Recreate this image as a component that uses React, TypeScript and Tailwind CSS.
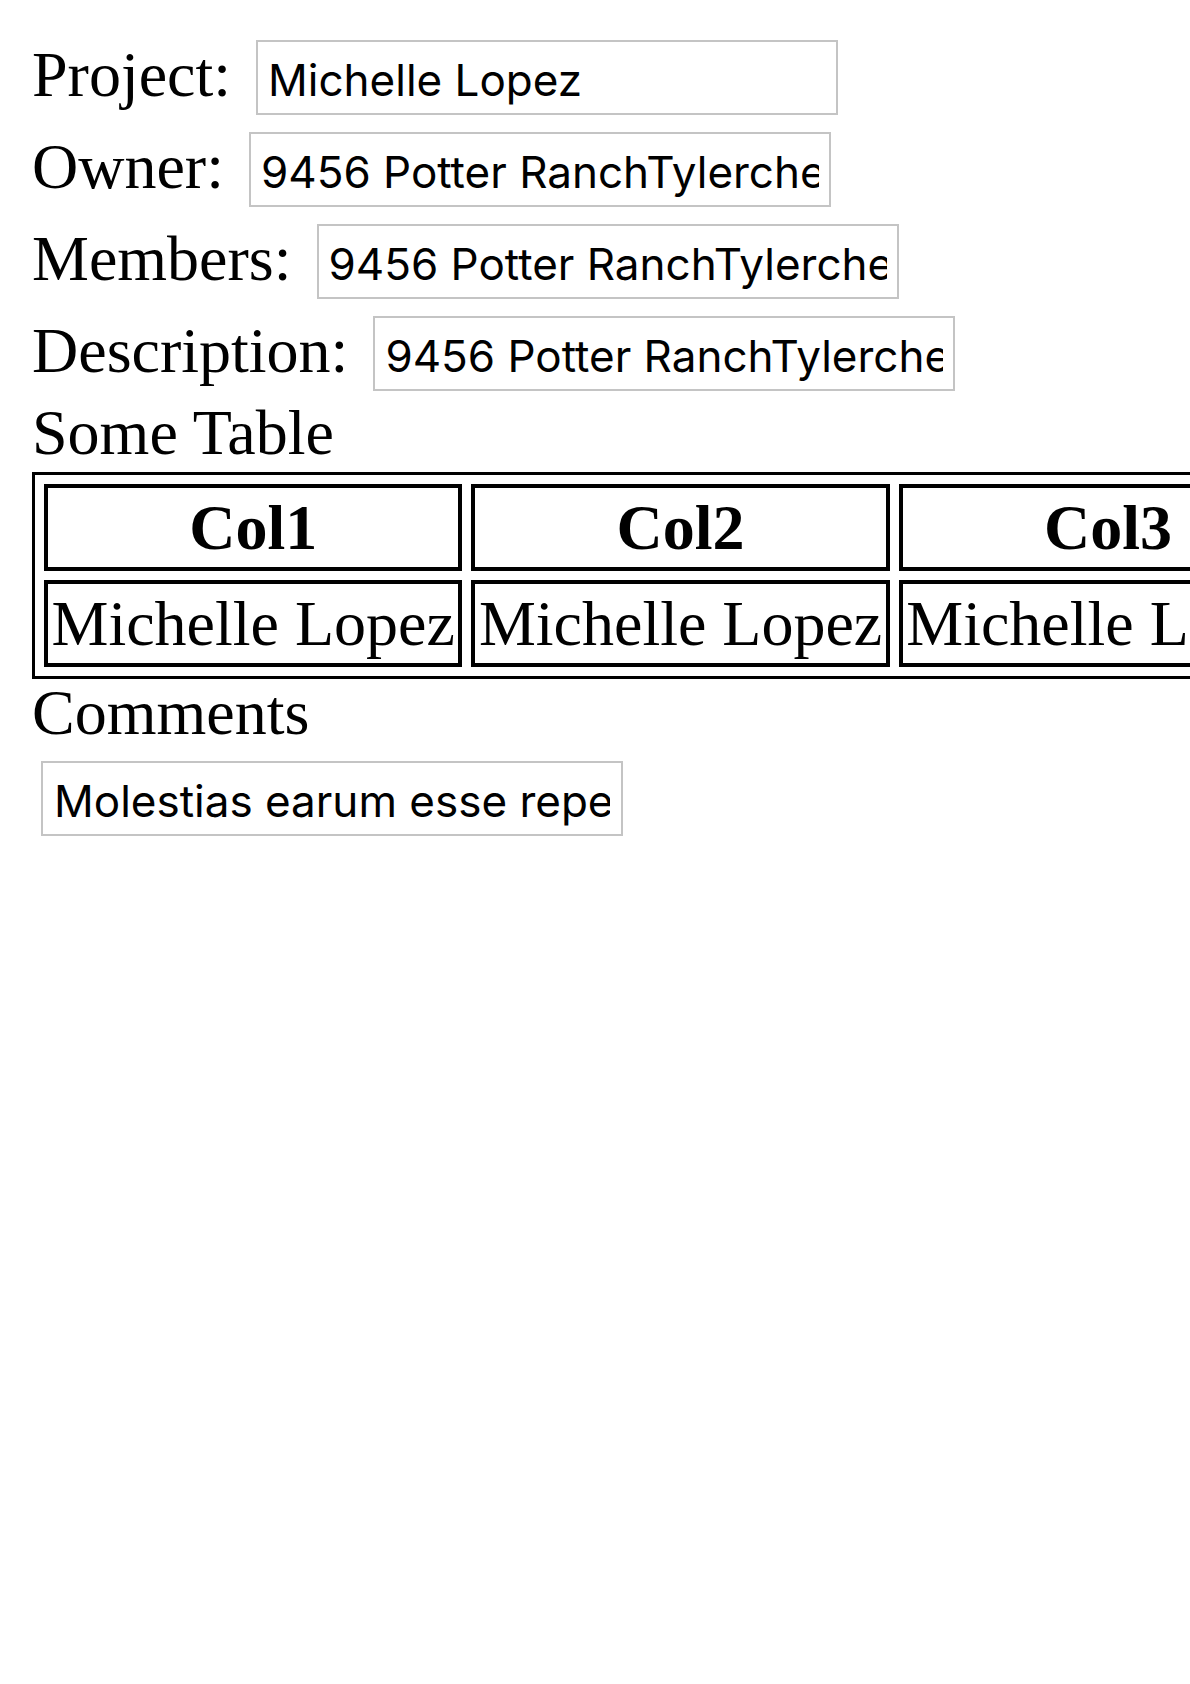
import React from "react";

const fields = [
  { label: "Project:", value: "Michelle Lopez" },
  { label: "Owner:", value: "9456 Potter RanchTylerchester, ME 45937" },
  { label: "Members:", value: "9456 Potter RanchTylerchester, ME 45937" },
  { label: "Description:", value: "9456 Potter RanchTylerchester, ME 45937" },
];

const cols = ["Col1", "Col2", "Col3"];

export default function App() {
  return (
    <div className="w-full min-h-[1684px] overflow-hidden bg-white text-black font-['Liberation_Serif','Times_New_Roman',serif]">
      <div className="pl-[32px] pt-[40px]">
        {/* Form fields */}
        <div className="flex flex-col gap-[17px]">
          {fields.map((f) => (
            <div key={f.label} className="flex items-baseline">
              <span className="mr-[25px] text-[64px] leading-[64px] whitespace-nowrap">{f.label}</span>
              <input
                readOnly
                value={f.value}
                className="h-[75px] w-[582px] shrink-0 border-2 border-[#c4c4c4] px-[10px] pt-[4px] text-[44px] text-black outline-none font-['Inter','Liberation_Sans',sans-serif]"
              />
            </div>
          ))}
        </div>

        {/* Table */}
        <h2 className="mt-[10px] text-[64px] leading-[64px]">Some Table</h2>
        <table className="mt-[7px] border-separate border-spacing-[9px] border-[3px] border-black">
          <thead>
            <tr>
              {cols.map((c) => (
                <th key={c} className="border-[4px] border-black px-[3.5px] py-[3px] text-center text-[64px] leading-[73px] font-bold whitespace-nowrap">
                  {c}
                </th>
              ))}
            </tr>
          </thead>
          <tbody>
            <tr>
              {cols.map((c) => (
                <td key={c} className="border-[4px] border-black px-[3.5px] py-[3px] text-[64px] leading-[73px] whitespace-nowrap">
                  Michelle Lopez
                </td>
              ))}
            </tr>
          </tbody>
        </table>

        {/* Comments */}
        <h2 className="mt-[2px] text-[64px] leading-[64px]">Comments</h2>
        <input
          readOnly
          value="Molestias earum esse repellendus quia."
          className="mt-[16px] ml-[9px] block h-[75px] w-[582px] border-2 border-[#c4c4c4] px-[11px] pt-[4px] text-[44px] text-black outline-none font-['Inter','Liberation_Sans',sans-serif]"
        />
      </div>
    </div>
  );
}
